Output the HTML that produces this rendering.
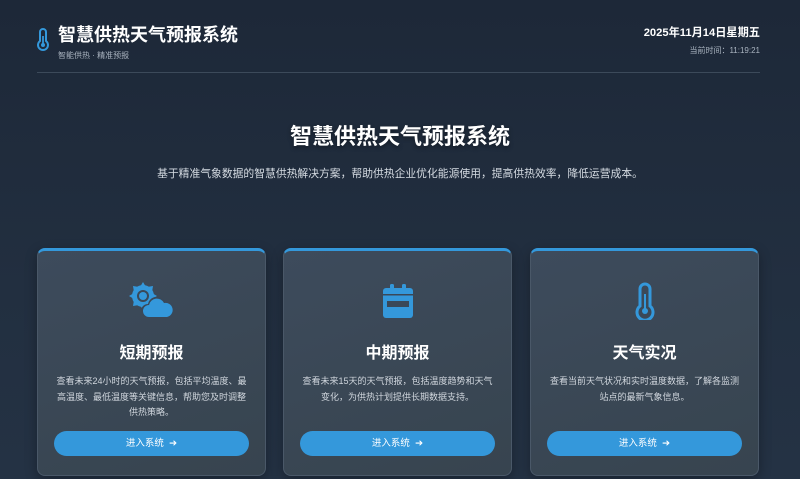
<!DOCTYPE html>
<html><head><meta charset="utf-8"><style>
*{margin:0;padding:0;box-sizing:border-box}
body{width:800px;height:479px;overflow:hidden;background:linear-gradient(180deg,#1d2838 0%,#222f40 60%,#243244 100%);font-family:"Liberation Sans","Noto Sans CJK SC",sans-serif;color:#fff;position:relative}
.abs{position:absolute}
.card{position:absolute;top:248px;width:229px;height:228px;border-radius:8px;background:linear-gradient(160deg,#3d4b5c,#37444f);border:1px solid #4a5868;border-top:3px solid #3498db;text-align:center;box-shadow:0 4px 12px rgba(0,0,0,.3)}
.card h3{position:absolute;top:88px;width:100%;font-size:16px;font-weight:bold}
.card p{position:absolute;top:123px;left:16px;right:16px;font-size:9px;line-height:15.5px;color:#d0d6dd}
.btn{position:absolute;top:180px;left:16px;right:16px;height:25px;border-radius:13px;background:#3498db;font-size:9.5px;line-height:25px;color:#fff}
.ic{position:absolute;left:50%;transform:translateX(-50%);top:31px}
</style></head><body>
<svg class="abs" style="left:36px;top:27px" width="14" height="24" viewBox="0 0 14 24"><path d="M4 14V5a3 3 0 0 1 6 0v9a5 5 0 1 1-6 0z" fill="none" stroke="#3498db" stroke-width="2"/><line x1="7" y1="9" x2="7" y2="17" stroke="#3498db" stroke-width="1.8"/><circle cx="7" cy="18" r="2" fill="#3498db"/></svg>
<div class="abs" style="left:58px;top:21px;font-size:18px;font-weight:bold">智慧供热天气预报系统</div>
<div class="abs" style="left:58px;top:50px;font-size:8px;color:#aab4c0">智能供热 · 精准预报</div>
<div class="abs" style="right:40px;top:24px;font-size:11.2px;font-weight:bold">2025年11月14日星期五</div>
<div class="abs" style="right:40px;top:45px;font-size:8px;color:#aab4c0">当前时间：11:19:21</div>
<div class="abs" style="left:37px;top:72px;width:723px;height:1px;background:#3c4a5a"></div>
<div class="abs" style="left:0;width:800px;top:119px;text-align:center;font-size:22px;font-weight:bold;text-shadow:0 2px 4px rgba(0,0,0,.4)">智慧供热天气预报系统</div>
<div class="abs" style="left:0;width:800px;top:165px;text-align:center;font-size:10.8px;color:#d6dce3">基于精准气象数据的智慧供热解决方案，帮助供热企业优化能源使用，提高供热效率，降低运营成本。</div>

<div class="card" style="left:37px">
<svg class="ic" width="48" height="38" viewBox="0 0 48 38"><g fill="#3498db"><circle cx="15" cy="14" r="11"/><path d="M15 0l3 5h-6zM15 28l3-5h-6zM1 14l5-3v6zM29 14l-5-3v6zM5 4l6 1-5 5zM25 4l-6 1 5 5zM5 24l6-1-5-5z"/></g><circle cx="15" cy="14" r="6" fill="#3a4858"/><circle cx="15" cy="14" r="4" fill="#3498db"/><path d="M20 36a7 7 0 0 1 0-14 9 9 0 0 1 17-2 8 8 0 0 1 3 16z" fill="#3a4858"/><path d="M21 35a6 6 0 0 1 0-12 8 8 0 0 1 15-2 7 7 0 0 1 3 14z" fill="#3498db"/></svg>
<h3>短期预报</h3>
<p>查看未来24小时的天气预报，包括平均温度、最高温度、最低温度等关键信息，帮助您及时调整供热策略。</p>
<div class="btn">进入系统 &nbsp;➔</div></div>

<div class="card" style="left:283px">
<svg class="ic" width="32" height="38" viewBox="0 0 32 38"><rect x="8" y="2" width="4" height="6" rx="1.5" fill="#3498db"/><rect x="20" y="2" width="4" height="6" rx="1.5" fill="#3498db"/><rect x="1" y="6" width="30" height="30" rx="3" fill="#3498db"/><rect x="1" y="12" width="30" height="1.5" fill="#3a4858"/><rect x="5" y="19" width="22" height="6" fill="#3a4858"/></svg>
<h3>中期预报</h3>
<p>查看未来15天的天气预报，包括温度趋势和天气变化，为供热计划提供长期数据支持。</p>
<div class="btn">进入系统 &nbsp;➔</div></div>

<div class="card" style="left:530px">
<svg class="ic" width="22" height="38" viewBox="0 0 22 38"><path d="M6 24V7a5 5 0 0 1 10 0v17a8 8 0 1 1-10 0z" fill="none" stroke="#3498db" stroke-width="3"/><line x1="11" y1="12" x2="11" y2="27" stroke="#3498db" stroke-width="2"/><circle cx="11" cy="29" r="3" fill="#3498db"/></svg>
<h3>天气实况</h3>
<p>查看当前天气状况和实时温度数据，了解各监测站点的最新气象信息。</p>
<div class="btn">进入系统 &nbsp;➔</div></div>
</body></html>
